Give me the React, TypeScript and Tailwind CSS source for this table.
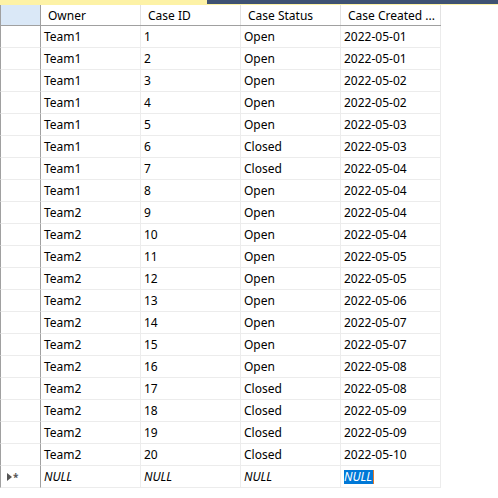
import React from "react"

const rows: [string, string, string, string][] = [
  ["Team1", "1", "Open", "2022-05-01"],
  ["Team1", "2", "Open", "2022-05-01"],
  ["Team1", "3", "Open", "2022-05-02"],
  ["Team1", "4", "Open", "2022-05-02"],
  ["Team1", "5", "Open", "2022-05-03"],
  ["Team1", "6", "Closed", "2022-05-03"],
  ["Team1", "7", "Closed", "2022-05-04"],
  ["Team1", "8", "Open", "2022-05-04"],
  ["Team2", "9", "Open", "2022-05-04"],
  ["Team2", "10", "Open", "2022-05-04"],
  ["Team2", "11", "Open", "2022-05-05"],
  ["Team2", "12", "Open", "2022-05-05"],
  ["Team2", "13", "Open", "2022-05-06"],
  ["Team2", "14", "Open", "2022-05-07"],
  ["Team2", "15", "Open", "2022-05-07"],
  ["Team2", "16", "Open", "2022-05-08"],
  ["Team2", "17", "Closed", "2022-05-08"],
  ["Team2", "18", "Closed", "2022-05-09"],
  ["Team2", "19", "Closed", "2022-05-09"],
  ["Team2", "20", "Closed", "2022-05-10"],
]

const headers = ["Owner", "Case ID", "Case Status", "Case Created ..."]

function RowHeader({ last }: { last?: boolean }) {
  return (
    <div className="w-[41px] h-[22px] border-l border-l-[#a0a0a0] border-r border-r-[#a0a0a0] border-b border-b-[#ececec] flex items-center pl-[6px] pt-[1px]">
      {last && (
        <span className="flex items-center gap-[1px]">
          <svg width="5" height="8" viewBox="0 0 5 8">
            <path d="M0 0 L5 4 L0 8 Z" fill="#555" />
          </svg>
          <span className="text-[10px] leading-none text-[#555] font-bold">*</span>
        </span>
      )}
    </div>
  )
}

function Cell({ children }: { children: React.ReactNode }) {
  return (
    <div className="w-[100px] h-[22px] border-r border-b border-[#ececec] flex items-center pl-[3px] pt-[1px] overflow-hidden whitespace-nowrap">
      {children}
    </div>
  )
}

export default function App() {
  return (
    <div
      className="w-[498px] h-[498px] bg-white text-[12px] text-black overflow-hidden"
      style={{ fontFamily: '"Segoe UI", "Noto Sans", "Open Sans", sans-serif' }}
    >
      <div className="flex h-[4px]">
        <div className="w-[207px] bg-[#fdf2a6]" />
        <div className="flex-1 bg-[#3f5273]" />
      </div>
      <div className="h-[1px] bg-[#fdf2a6]" />

      <div className="flex h-[21px] w-[441px] border-b border-[#a0a0a0]">
        <div className="w-[41px] bg-[#dae8f7] border-l border-l-[#a0a0a0] border-r border-r-[#a0a0a0]" />
        {headers.map((h) => (
          <div key={h} className="w-[100px] border-r border-[#e2e2e2] flex items-center pl-[7px] pt-[1px] whitespace-nowrap">
            {h}
          </div>
        ))}
      </div>

      {rows.map((r, i) => (
        <div key={i} className="flex">
          <RowHeader />
          {r.map((v, j) => (
            <Cell key={j}>{v}</Cell>
          ))}
        </div>
      ))}

      <div className="flex">
        <RowHeader last />
        <Cell><span className="italic">NULL</span></Cell>
        <Cell><span className="italic">NULL</span></Cell>
        <Cell><span className="italic">NULL</span></Cell>
        <Cell>
          <span className="italic bg-[#0078d7] text-white leading-[14px] pr-[1px] border-r border-[#e07a2c]">NULL</span>
        </Cell>
      </div>
    </div>
  )
}
